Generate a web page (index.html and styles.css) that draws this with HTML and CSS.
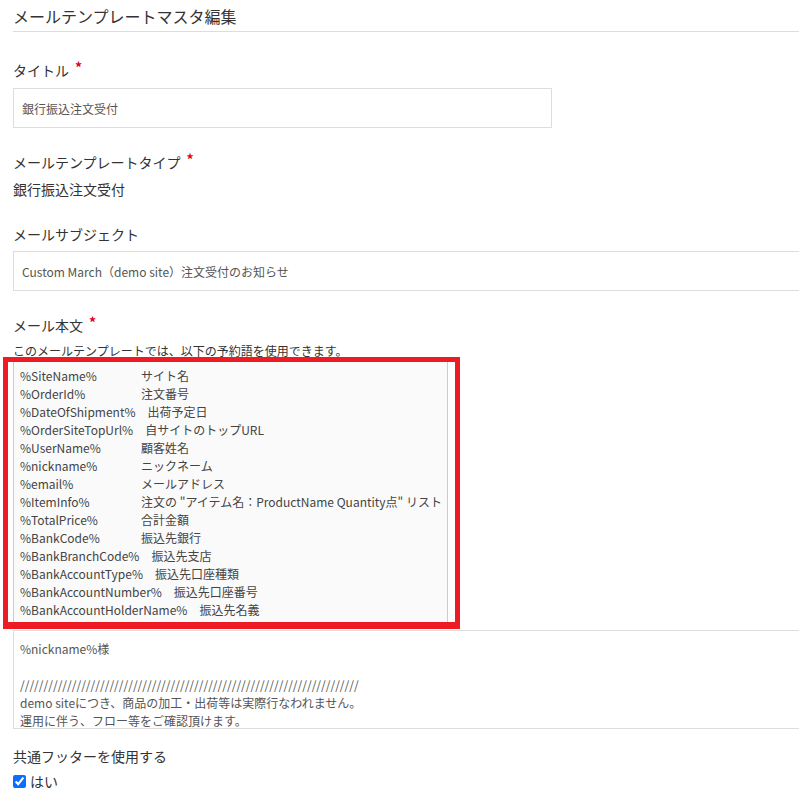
FILE: index.html
```html
<!DOCTYPE html>
<html lang="ja">
    <head>
        <meta charset="UTF-8">
        <meta name="viewport" content="width=device-width, initial-scale=1.0">
        <title>メールテンプレートマスタ編集</title>
        <link rel="stylesheet" href="styles.css">
    </head>
    <body>
        <div class="page">
            <h1 class="page-title">メールテンプレートマスタ編集</h1>

            <div class="form-group first">
                <label class="form-label" for="title">タイトル<span class="required">*</span></label>
                <input type="text" id="title" class="form-input short" value="銀行振込注文受付"/>
            </div>

            <div class="form-group">
                <label class="form-label">メールテンプレートタイプ<span class="required">*</span></label>
                <div class="form-value">銀行振込注文受付</div>
            </div>

            <div class="form-group">
                <label class="form-label" for="subject">メールサブジェクト</label>
                <input type="text" id="subject" class="form-input" value="Custom March（demo site）注文受付のお知らせ"/>
            </div>

            <div class="form-group">
                <label class="form-label">メール本文<span class="required">*</span></label>
                <div class="help-text">このメールテンプレートでは、以下の予約語を使用できます。</div>
                <!-- 予約語一覧 -->
                <div class="reserved">
                    <div class="reserved-row"><span class="key">%SiteName%</span>サイト名</div>
                    <div class="reserved-row"><span class="key">%OrderId%</span>注文番号</div>
                    <div class="reserved-row"><span class="key">%DateOfShipment%</span>出荷予定日</div>
                    <div class="reserved-row"><span class="key">%OrderSiteTopUrl%</span>自サイトのトップURL</div>
                    <div class="reserved-row"><span class="key">%UserName%</span>顧客姓名</div>
                    <div class="reserved-row"><span class="key">%nickname%</span>ニックネーム</div>
                    <div class="reserved-row"><span class="key">%email%</span>メールアドレス</div>
                    <div class="reserved-row"><span class="key">%ItemInfo%</span>注文の "アイテム名：ProductName Quantity点" リスト</div>
                    <div class="reserved-row"><span class="key">%TotalPrice%</span>合計金額</div>
                    <div class="reserved-row"><span class="key">%BankCode%</span>振込先銀行</div>
                    <div class="reserved-row"><span class="key">%BankBranchCode%</span>振込先支店</div>
                    <div class="reserved-row"><span class="key">%BankAccountType%</span>振込先口座種類</div>
                    <div class="reserved-row"><span class="key">%BankAccountNumber%</span>振込先口座番号</div>
                    <div class="reserved-row"><span class="key">%BankAccountHolderName%</span>振込先名義</div>
                    <div class="highlight"></div>
                </div>
                <div class="form-textarea">%nickname%様

////////////////////////////////////////////////////////////////////////
demo siteにつき、商品の加工・出荷等は実際行なわれません。
運用に伴う、フロー等をご確認頂けます。
</div>
            </div>

            <div class="form-group footer-group">
                <label class="form-label">共通フッターを使用する</label>
                <label class="check"><input type="checkbox" checked/>はい</label>
            </div>
        </div>
    </body>
</html>
```

FILE: styles.css
```css
html, body {
    margin: 0;
    overflow: hidden;
    background: #fff;
}

body {
    font-family: "Noto Sans CJK JP", sans-serif;
    color: #333;
}

.page {
    width: 820px;
    padding-left: 13px;
}

.page-title {
    margin: 0;
    padding: 4px 0 3px;
    font-size: 16px;
    line-height: 24px;
    font-weight: normal;
    border-bottom: 1px solid #ddd;
}

.form-group {
    margin-top: 24px;
}

.form-group.first {
    margin-top: 28px;
}

.form-group.footer-group {
    margin-top: 17px;
}

.form-label {
    display: block;
    font-size: 14px;
    line-height: 20px;
    margin-bottom: 7px;
}

.first .form-label {
    margin-bottom: 8px;
}

.footer-group .form-label {
    margin-bottom: 5px;
}

.required {
    color: #e3001b;
    font-weight: bold;
    margin-left: 6px;
    position: relative;
    top: -3px;
}

.form-input {
    display: block;
    box-sizing: border-box;
    width: 100%;
    height: 40px;
    margin: 0;
    padding: 0 8px;
    border: 1px solid #ddd;
    border-radius: 0;
    background: #fff;
    font-family: inherit;
    font-size: 12px;
    color: #555;
    outline: none;
}

.form-input.short {
    width: 539px;
}

.form-value {
    font-size: 14px;
    line-height: 22px;
    margin-top: -1px;
}

.help-text {
    font-size: 12px;
    line-height: 18px;
}

/* 予約語一覧 */
.reserved {
    position: relative;
    width: 435px;
    box-sizing: border-box;
    margin-top: 1px;
    padding: 5px 6px;
    border: 1px solid #ccc;
    background: #fafafa;
    font-size: 12px;
    line-height: 18px;
    color: #444;
    white-space: nowrap;
}

.key {
    display: inline-block;
    min-width: 109px;
    margin-right: 12px;
}

/* 赤枠 */
.highlight {
    position: absolute;
    top: -5px;
    left: -11px;
    right: -13px;
    bottom: -5px;
    border: 5px solid #ed1c24;
    border-bottom-width: 7px;
}

.form-textarea {
    box-sizing: border-box;
    height: 99px;
    margin-top: 5px;
    padding: 9px 6px 0;
    border: 1px solid #ddd;
    overflow: hidden;
    font-size: 12px;
    line-height: 18px;
    color: #555;
    white-space: pre-wrap;
}

.check {
    display: flex;
    align-items: center;
    font-size: 14px;
    line-height: 20px;
}

.check input {
    width: 13px;
    height: 13px;
    margin: 0 4px 0 0;
    accent-color: #0d6efd;
}
```
